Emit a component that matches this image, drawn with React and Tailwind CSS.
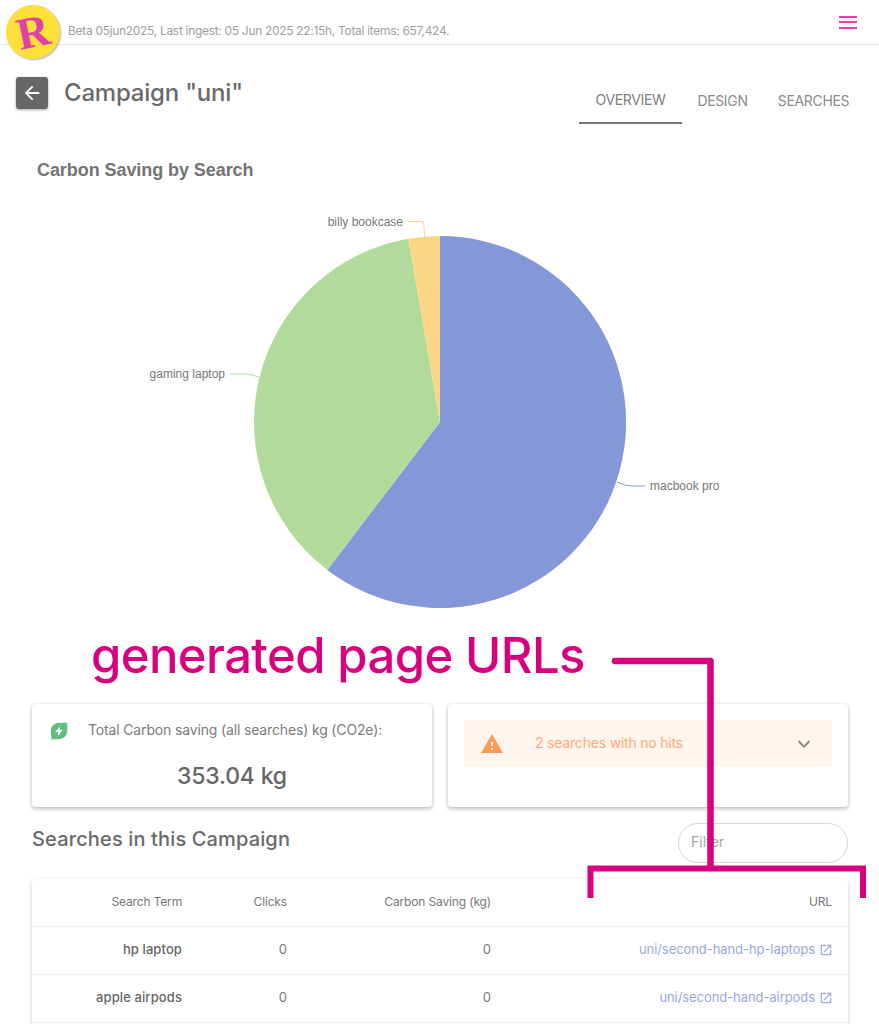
const I = ({ d, className }) => (
  <svg viewBox="0 0 24 24" fill="currentColor" className={className}><path d={d} /></svg>
);
const rows = [
  ["hp laptop", "uni/second-hand-hp-laptops"],
  ["apple airpods", "uni/second-hand-airpods"],
  ["", ""],
];
function Pie() {
  return (
    <svg width="879" height="440" viewBox="0 190 879 440" className="mt-[7px] block">
      <path d="M440 422 L440 236 A186 186 0 1 1 327.3 569.9 Z" fill="#8497d8" />
      <path d="M440 422 L327.3 569.9 A186 186 0 0 1 408.3 238.7 Z" fill="#b1da9b" />
      <path d="M440 422 L408.3 238.7 A186 186 0 0 1 440 236 Z" fill="#fbd685" />
      <path d="M408 221.5 H423 Q424 221.5 424.5 237" fill="none" stroke="#fbd685" />
      <path d="M230 374 H245 Q250 374 259 377" fill="none" stroke="#b1da9b" />
      <path d="M617 482 Q625 486 632 486 H645" fill="none" stroke="#8497d8" />
      <g fontFamily="'Liberation Sans', sans-serif" fontSize="12" fill="#777777">
        <text x="403" y="226" textAnchor="end">billy bookcase</text>
        <text x="225" y="378" textAnchor="end">gaming laptop</text>
        <text x="650" y="490">macbook pro</text>
      </g>
    </svg>
  );
}
export default function App() {
  return (
    <div className="relative h-[1024px] w-full overflow-hidden bg-white font-['Inter',sans-serif] text-[#666]">
      <header className="flex h-[45px] items-center justify-between border-b border-[#e6e6e6] pl-[68px] pr-[22px]">
        <span className="mt-[17px] text-[12px] tracking-[-0.31px] text-[#a0a0a0]">Beta 05jun2025, Last ingest: 05 Jun 2025 22:15h, Total items: 657,424.</span>
        <div className="flex w-[18px] flex-col gap-[3.5px]">
          <div className="h-[2px] bg-[#e83fa6]" />
          <div className="h-[2px] bg-[#e83fa6]" />
          <div className="h-[2px] bg-[#e83fa6]" />
        </div>
      </header>
      <div className="absolute left-[6px] top-[5px] flex h-[54px] w-[54px] items-center justify-center rounded-full bg-[#fde03a] shadow-[1px_1px_2px_rgba(0,0,0,0.3)]">
        <span className="-rotate-12 font-['Liberation_Serif',serif] text-[45px] font-bold leading-none text-[#e040a8]">R</span>
      </div>

      <div className="flex items-start justify-between pl-4 pr-[15px] pt-[32px]">
        <div className="flex items-center gap-4">
          <div className="flex h-8 w-8 items-center justify-center rounded-[3px] bg-[#666] text-white shadow-[0_1px_3px_rgba(0,0,0,0.35)]">
            <I d="M20 11H7.83l5.59-5.59L12 4l-8 8 8 8 1.41-1.41L7.83 13H20v-2z" className="h-[22px] w-[22px]" />
          </div>
          <h1 className="text-[24px] font-medium leading-8 tracking-[-0.2px] text-[#6a6a6a]">Campaign "uni"</h1>
        </div>
        <nav className="flex text-[14px] tracking-[-0.35px] text-[#8c8c8c]">
          <div className="flex h-[47px] w-[103px] items-center justify-center border-b-2 border-[#777] text-[#808080]">OVERVIEW</div>
          <div className="flex h-[47px] w-[81px] items-center justify-center">DESIGN</div>
          <div className="flex h-[47px] w-[101px] items-center justify-center">SEARCHES</div>
        </nav>
      </div>

      <h2 className="pl-[37px] pt-[33px] font-['Liberation_Sans',sans-serif] text-[18px] font-bold leading-[26px] tracking-[-0.07px] text-[#747474]">Carbon Saving by Search</h2>
      <Pie />

      <section className="mx-8 mt-[74px] grid w-[816px] grid-cols-2 gap-4">
        <div className="h-[103px] rounded bg-white px-5 pt-4 shadow-[0_2px_4px_rgba(0,0,0,0.25),0_0_3px_rgba(0,0,0,0.08)]">
          <div className="flex items-start gap-[18px]">
            <svg viewBox="0 0 24 24" className="-ml-[4px] h-[22px] w-[22px] shrink-0 text-[#5fbf7f]" fill="currentColor">
              <path fillRule="evenodd" d="M21 3v9c0 5-4 9-9 9H5l-2 1 1-2.5C3.4 18 3 15 3 12c0-5 4-9 9-9h9zM13.5 6.5 8 13h3v4.5l5-6.5h-3V6.5z" />
            </svg>
            <span className="text-[14px] leading-5 tracking-[-0.15px] text-[#7c7c7c]">Total Carbon saving (all searches) kg (CO2e):</span>
          </div>
          <div className="mt-[18px] text-center text-[23px] font-medium leading-8 tracking-[-0.2px] text-[#666]">353.04 kg</div>
        </div>
        <div className="h-[103px] rounded bg-white px-4 pt-4 shadow-[0_2px_4px_rgba(0,0,0,0.25),0_0_3px_rgba(0,0,0,0.08)]">
          <div className="flex h-[47px] items-center bg-[#fff4ee] pl-4 pr-4">
            <I d="M1 21h22L12 2 1 21zm12-3h-2v-2h2v2zm0-4h-2v-4h2v4z" className="h-6 w-6 text-[#ff9a55]" />
            <span className="-mt-0.5 ml-[31px] flex-1 text-[14px] tracking-[-0.2px] text-[#ffab76]">2 searches with no hits</span>
            <I d="M16.59 8.59 12 13.17 7.41 8.59 6 10l6 6 6-6z" className="h-6 w-6 text-[#8a8a8a]" />
          </div>
        </div>
      </section>

      <div className="mx-8 mt-4 flex w-[816px] items-center justify-between">
        <h3 className="-mt-2 text-[20px] font-medium tracking-[0.14px] text-[#6a6a6a]">Searches in this Campaign</h3>
        <div className="flex h-10 w-[170px] items-center rounded-full border border-[#d5d5d5] pb-1 pl-3 text-[14px] text-[#a6a6a6]">Filter</div>
      </div>

      <table className="mx-8 mt-4 w-[816px] table-fixed border-collapse rounded bg-white text-right text-[13px] tracking-[0.1px] shadow-[0_1px_4px_rgba(0,0,0,0.2)]">
        <colgroup>
          <col className="w-[166px]" />
          <col className="w-[105px]" />
          <col className="w-[204px]" />
          <col />
        </colgroup>
        <thead>
          <tr className="h-[47px] border-b border-[#ececec] text-[12px] tracking-[-0.15px] text-[#777]">
            <th className="px-4 font-normal">Search Term</th>
            <th className="px-4 font-normal">Clicks</th>
            <th className="px-4 font-normal">Carbon Saving (kg)</th>
            <th className="px-4 font-normal">URL</th>
          </tr>
        </thead>
        <tbody>
          {rows.map(([term, url], i) => (
            <tr key={i} className="h-[48px] border-b border-[#ececec]">
              <td className="px-4 font-medium text-[#666]">{term}</td>
              <td className="px-4 text-[#777]">{url && "0"}</td>
              <td className="px-4 text-[#777]">{url && "0"}</td>
              <td className="px-4 tracking-[-0.07px] text-[#98a8e0]">
                {url && (
                  <span className="-mr-px inline-flex items-center gap-1">
                    {url}
                    <I d="M19 19H5V5h7V3H5c-1.11 0-2 .9-2 2v14c0 1.1.89 2 2 2h14c1.1 0 2-.9 2-2v-7h-2v7zM14 3v2h3.59l-9.83 9.83 1.41 1.41L19 6.41V10h2V3h-7z" className="h-3.5 w-3.5" />
                  </span>
                )}
              </td>
            </tr>
          ))}
        </tbody>
      </table>

      <div className="absolute left-[91px] top-[622px] text-[49px] font-medium leading-[68px] tracking-[-0.6px] text-[#d9007f]">generated page URLs</div>
      <svg className="pointer-events-none absolute left-0 top-0" width="879" height="1024" fill="none" stroke="#d9007f" strokeWidth="6">
        <path d="M615 661 H710.5 V868" strokeLinecap="round" strokeLinejoin="round" strokeWidth="6.5" />
        <path d="M590.5 898 V868.5 H863 V898" />
      </svg>
    </div>
  );
}
